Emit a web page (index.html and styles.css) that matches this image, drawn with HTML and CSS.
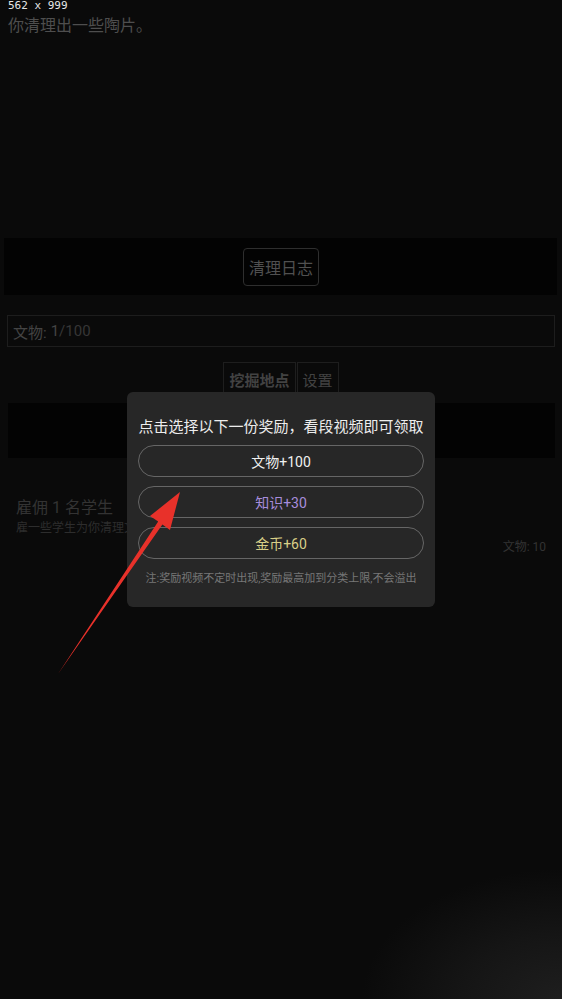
FILE: index.html
```html
<!DOCTYPE html>
<html lang="zh-CN">
<head>
    <meta charset="UTF-8">
    <meta name="viewport" content="width=device-width, initial-scale=1.0">
    <title>挖掘</title>
    <link rel="stylesheet" href="styles.css">
</head>
<body>
    <div class="size-tag">562 x 999</div>

    <div class="log">
        <p class="log-line">你清理出一些陶片。</p>
    </div>

    <div class="log-bar">
        <button class="btn">清理日志</button>
    </div>

    <div class="stock">
        <span class="stock-label">文物:</span> 1<span class="stock-max">/100</span>
    </div>

    <div class="tabs">
        <div class="tab active">挖掘地点</div>
        <div class="tab">设置</div>
    </div>

    <div class="panel-band"></div>

    <div class="hire">
        <div class="hire-title">雇佣 1 名学生</div>
        <div class="hire-desc">雇一些学生为你清理文物</div>
        <div class="hire-cost">文物: 10</div>
    </div>

    <div class="modal">
        <div class="modal-title">点击选择以下一份奖励，看段视频即可领取</div>
        <button class="reward">文物+100</button>
        <button class="reward knowledge">知识+30</button>
        <button class="reward gold">金币+60</button>
        <div class="modal-note">注:奖励视频不定时出现,奖励最高加到分类上限,不会溢出</div>
    </div>

    <svg class="arrow" width="562" height="999" viewBox="0 0 562 999">
        <polygon points="180,492 170,530 162.4,524.4 58,674 158.2,521.6 150,516" fill="#e8312a"/>
    </svg>
</body>
</html>
```

FILE: styles.css
```css
* {
    box-sizing: border-box;
}

body {
    margin: 0;
    min-height: 999px;
    position: relative;
    font-family: Roboto, "Noto Sans CJK SC", sans-serif;
    color: #444;
    background-color: #0a0a0a;
    background-image: radial-gradient(ellipse 200px 130px at 100% 100%, #1e1e1e 0, #151515 50%, rgba(10, 10, 10, 0) 100%);
    background-repeat: no-repeat;
    background-size: 100% 999px;
}

.size-tag {
    position: absolute;
    top: 0;
    left: 8px;
    line-height: 11px;
    font-family: "DejaVu Sans Mono", monospace;
    font-size: 11px;
    color: #e6e6e6;
}

.log {
    height: 238px;
    padding: 12px 8px 0;
}

.log-line {
    margin: 0;
    font-size: 16px;
    color: #4e4e4e;
}

.log-bar {
    margin: 0 5px 0 4px;
    height: 57px;
    background-color: #030303;
    display: flex;
    justify-content: center;
    align-items: center;
}

.btn {
    font-family: inherit;
    font-size: 16px;
    color: #505050;
    background: transparent;
    border: 1px solid #2e2e2e;
    border-radius: 4px;
    padding: 6px 5px;
    margin-left: 1px;
}

.stock {
    margin: 20px 7px 0;
    height: 32px;
    border: 1px solid #1d1d1d;
    padding: 0 5px;
    display: flex;
    align-items: center;
    font-size: 15px;
    color: #444;
}

.stock-label {
    margin-right: 4px;
}

.stock-max {
    color: #363636;
}

.tabs {
    margin-top: 15px;
    display: flex;
    justify-content: center;
    gap: 1px;
}

.tab {
    border: 1px solid #1e1e1e;
    padding: 6px 5px;
    font-size: 15px;
    font-weight: bold;
    color: #424242;
}

.tab:last-child {
    font-weight: normal;
}

.panel-band {
    margin: 6px 7px 0 8px;
    height: 55px;
    background-color: #030303;
}

.hire {
    position: relative;
    padding: 36px 16px 0;
}

.hire-title {
    font-size: 16px;
    color: #333;
}

.hire-desc {
    font-size: 12px;
    color: #2d2d2d;
    margin-top: 0;
}

.hire-cost {
    text-align: right;
    font-size: 12px;
    color: #333;
    margin-top: 2px;
}

.modal {
    position: absolute;
    top: 392px;
    left: 127px;
    width: 308px;
    height: 215px;
    background-color: #272727;
    border-radius: 6px;
    padding: 23px 11px 0;
    display: flex;
    flex-direction: column;
    align-items: stretch;
    gap: 9px;
}

.modal-title {
    text-align: center;
    font-size: 15px;
    color: #ededed;
    margin-bottom: 0;
}

.reward {
    height: 32px;
    font-family: inherit;
    font-size: 14px;
    color: #f0f0f0;
    background: transparent;
    border: 1px solid #666;
    border-radius: 16px;
}

.reward.knowledge {
    color: #a78ddd;
}

.reward.gold {
    color: #d9cf88;
}

.modal-note {
    text-align: center;
    font-size: 11px;
    color: #777;
    margin-top: 1px;
}

.arrow {
    position: absolute;
    top: 0;
    left: 0;
    pointer-events: none;
}
```
